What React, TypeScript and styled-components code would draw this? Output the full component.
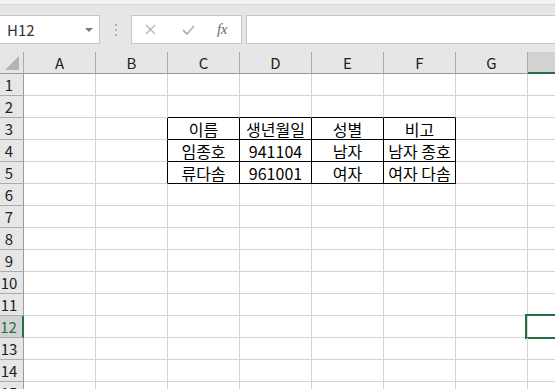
import React from 'react';
import styled, { createGlobalStyle } from 'styled-components';

const c_grid = '#d4d4d4';
const c_header = '#e6e6e6';
const c_header_line = '#ababab';
const c_selected = '#d2d2d2';
const c_green = '#217346';
const c_box_line = '#c6c6c6';
const t_font = '"Noto Sans CJK KR", "Noto Sans", sans-serif';

const COLUMNS = ['A', 'B', 'C', 'D', 'E', 'F', 'G', 'H'];
const ROW_COUNT = 15;
const SELECTED = { col: 'H', row: 12 };
// bordered block C3:F5
const BLOCK = { c0: 2, c1: 5, r0: 3, r1: 5 };

const DATA: Record<string, string> = {
  C3: '이름',
  D3: '생년월일',
  E3: '성별',
  F3: '비고',
  C4: '임종호',
  D4: '941104',
  E4: '남자',
  F4: '남자 종호',
  C5: '류다솜',
  D5: '961001',
  E5: '여자',
  F5: '여자 다솜',
};

const GlobalStyle = createGlobalStyle`
  html, body {
    margin: 0;
    padding: 0;
    background: #ffffff;
    overflow: hidden;
  }
  * { box-sizing: border-box; }
`;

const Page = styled.div`
  width: 555px;
  height: 389px;
  overflow: hidden;
  display: flex;
  flex-direction: column;
  font-family: ${t_font};
`;

/* Ribbon remains at the very top (cut off) */
const RibbonEdge = styled.div`
  height: 5px;
  flex: none;
  display: flex;
  overflow: hidden;
  background: #f3f3f3;
  border-bottom: 1px solid #d5d5d5;
`;

const RibbonLabel = styled.span<{ $left: number }>`
  margin-left: ${(p) => p.$left}px;
  margin-top: -14px;
  font-size: 12px;
  line-height: 16px;
  color: #5e5030;
  white-space: nowrap;
`;

/* Formula bar */
const FormulaBar = styled.div`
  height: 47px;
  flex: none;
  display: flex;
  align-items: flex-start;
  padding-top: 10px;
  background: ${c_header};
`;

const NameBox = styled.div`
  width: 101px;
  height: 29px;
  margin-left: -1px;
  display: flex;
  align-items: center;
  justify-content: space-between;
  padding: 0 6px 0 7px;
  background: #ffffff;
  border: 1px solid ${c_box_line};
  font-size: 15px;
  color: #333333;
`;

const DropArrow = styled.span`
  width: 0;
  height: 0;
  border-left: 4px solid transparent;
  border-right: 4px solid transparent;
  border-top: 4px solid #7a7a7a;
`;

const Grip = styled.div`
  width: 31px;
  height: 29px;
  display: flex;
  flex-direction: column;
  align-items: center;
  justify-content: center;
  gap: 3px;
`;

const GripDot = styled.span`
  width: 2px;
  height: 2px;
  background: #b4b4b4;
`;

const FxButtons = styled.div`
  width: 111px;
  height: 29px;
  display: flex;
  align-items: center;
  padding-left: 13px;
  background: #ffffff;
  border: 1px solid ${c_box_line};
`;

const FxIcon = styled.span<{ $width: number }>`
  width: ${(p) => p.$width}px;
  display: flex;
  align-items: center;
  justify-content: flex-start;
`;

const FxLabel = styled.span`
  font-family: 'Liberation Serif', serif;
  font-style: italic;
  font-size: 15px;
  color: #6a6a6a;
  letter-spacing: -0.5px;
`;

const FormulaInput = styled.div`
  flex: 1;
  height: 29px;
  margin-left: 4px;
  margin-right: -1px;
  background: #ffffff;
  border: 1px solid ${c_box_line};
`;

/* Sheet */
const Sheet = styled.div`
  display: grid;
  grid-template-columns: 24px repeat(8, 72px);
  grid-auto-rows: 22px;
  background: #ffffff;
`;

const Corner = styled.div`
  display: flex;
  align-items: flex-end;
  justify-content: flex-end;
  padding: 0 4px 3px 0;
  background: ${c_header};
  border-right: 1px solid ${c_header_line};
  border-bottom: 1px solid #9b9b9b;
`;

const ColHeader = styled.div<{ $active?: boolean }>`
  display: flex;
  align-items: center;
  justify-content: center;
  font-size: 15px;
  color: #222222;
  background: ${(p) => (p.$active ? c_selected : c_header)};
  border-right: 1px solid ${c_header_line};
  border-bottom: ${(p) => (p.$active ? `2px solid ${c_green}` : '1px solid #9b9b9b')};
`;

const RowHeader = styled.div<{ $active?: boolean }>`
  display: flex;
  align-items: center;
  justify-content: center;
  padding-right: 5px;
  font-size: 15px;
  color: ${(p) => (p.$active ? c_green : '#222222')};
  background: ${(p) => (p.$active ? c_selected : c_header)};
  border-right: ${(p) => (p.$active ? `2px solid ${c_green}` : '1px solid #9b9b9b')};
  border-bottom: 1px solid ${c_header_line};
`;

const Cell = styled.div<{ $blackRight?: boolean; $blackBottom?: boolean; $selected?: boolean }>`
  position: relative;
  display: flex;
  align-items: center;
  justify-content: center;
  font-size: 16px;
  color: #000000;
  white-space: nowrap;
  border-right: 1px solid ${(p) => (p.$blackRight ? '#000000' : c_grid)};
  border-bottom: 1px solid ${(p) => (p.$blackBottom ? '#000000' : c_grid)};

  ${(p) =>
    p.$selected &&
    `
    &::after {
      content: '';
      position: absolute;
      top: -2px;
      left: -3px;
      right: -2px;
      bottom: -2px;
      border: 2px solid ${c_green};
    }
  `}
`;

const inBlock = (ci: number, r: number) =>
  ci >= BLOCK.c0 && ci <= BLOCK.c1 && r >= BLOCK.r0 && r <= BLOCK.r1;

export default function App() {
  const rows = Array.from({ length: ROW_COUNT }, (_, i) => i + 1);

  return (
    <Page>
      <GlobalStyle />
      <RibbonEdge>
        <RibbonLabel $left={33}>보기</RibbonLabel>
        <RibbonLabel $left={453}>공유</RibbonLabel>
      </RibbonEdge>

      <FormulaBar>
        <NameBox>
          H12
          <DropArrow />
        </NameBox>
        <Grip>
          <GripDot />
          <GripDot />
          <GripDot />
        </Grip>
        <FxButtons>
          <FxIcon $width={37}>
            <svg width="11" height="11" viewBox="0 0 11 11">
              <path d="M1 1 L10 10 M10 1 L1 10" stroke="#b4b4b4" strokeWidth="1.3" fill="none" />
            </svg>
          </FxIcon>
          <FxIcon $width={35}>
            <svg width="13" height="10" viewBox="0 0 13 10">
              <path d="M1 5 L5 9 L12 1" stroke="#b4b4b4" strokeWidth="1.8" fill="none" />
            </svg>
          </FxIcon>
          <FxIcon $width={20}>
            <FxLabel>fx</FxLabel>
          </FxIcon>
        </FxButtons>
        <FormulaInput />
      </FormulaBar>

      <Sheet>
        <Corner>
          <svg width="14" height="14" viewBox="0 0 14 14">
            <path d="M14 0 L14 14 L0 14 Z" fill="#b4b4b4" />
          </svg>
        </Corner>
        {COLUMNS.map((col) => (
          <ColHeader key={col} $active={col === SELECTED.col}>
            {col}
          </ColHeader>
        ))}

        {rows.map((r) => (
          <React.Fragment key={r}>
            <RowHeader $active={r === SELECTED.row}>{r}</RowHeader>
            {COLUMNS.map((col, ci) => {
              const blackRight =
                inBlock(ci, r) || (ci === BLOCK.c0 - 1 && r >= BLOCK.r0 && r <= BLOCK.r1);
              const blackBottom =
                inBlock(ci, r) || (r === BLOCK.r0 - 1 && ci >= BLOCK.c0 && ci <= BLOCK.c1);
              return (
                <Cell
                  key={col}
                  $blackRight={blackRight}
                  $blackBottom={blackBottom}
                  $selected={col === SELECTED.col && r === SELECTED.row}
                >
                  {DATA[`${col}${r}`]}
                </Cell>
              );
            })}
          </React.Fragment>
        ))}
      </Sheet>
    </Page>
  );
}
